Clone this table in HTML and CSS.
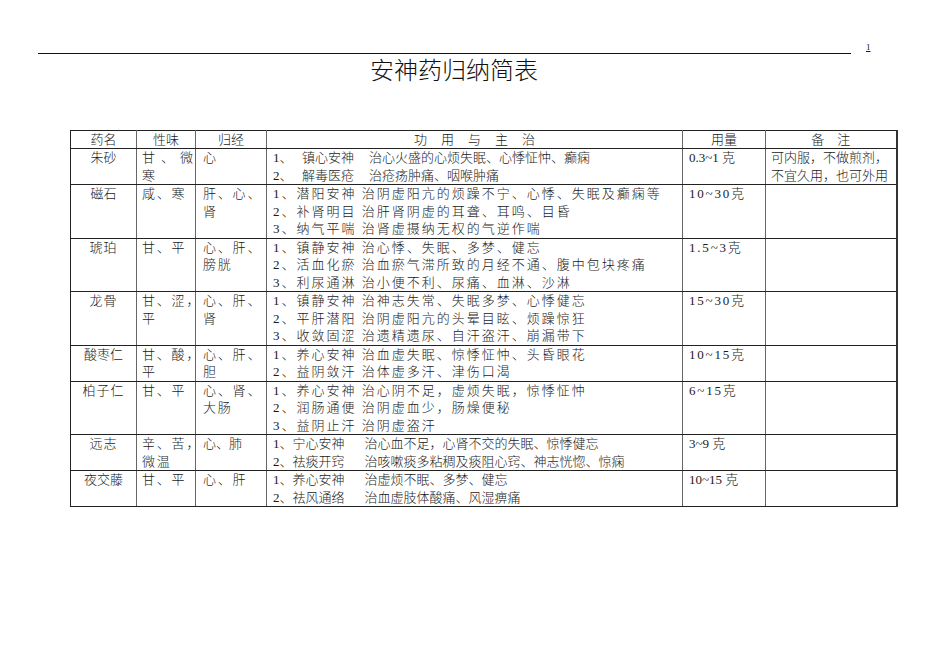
FILE: index.html
```html
<!DOCTYPE html>
<html lang="zh-CN">
<head>
<meta charset="utf-8">
<title>安神药归纳简表</title>
<link rel="stylesheet" href="styles.css">
</head>
<body>
<div class="head">
  <div class="rule"></div>
  <div class="pno">1</div>
</div>
<h1 class="title">安神药归纳简表</h1>
<table class="tbl">
  <colgroup>
    <col class="c-name"><col class="c-taste"><col class="c-mer"><col class="c-eff"><col class="c-dose"><col class="c-note">
  </colgroup>
  <thead>
    <tr>
      <th>药名</th><th>性味</th><th>归经</th><th class="wide">功用与主治</th><th>用量</th><th class="wide2">备注</th>
    </tr>
  </thead>
  <tbody>
    <tr>
      <td class="name">朱砂</td>
      <td class="taste"><div class="just">甘<span>、</span>微</div><div>寒</div></td>
      <td class="mer"><div>心</div></td>
      <td class="eff">
        <div class="ln"><span class="no">1、</span><span class="term">镇心安神</span><span class="gap1"></span>治心火盛的心烦失眠、心悸怔忡、癫痫</div>
        <div class="ln"><span class="no">2、</span><span class="term">解毒医疮</span><span class="gap1"></span>治疮疡肿痛、咽喉肿痛</div>
      </td>
      <td class="dose">0.3~1 克</td>
      <td class="note"><div>可内服，不做煎剂，</div><div>不宜久用，也可外用</div></td>
    </tr>
    <tr>
      <td class="name">磁石</td>
      <td class="taste sp"><div>咸、寒</div></td>
      <td class="mer sp"><div>肝、心、</div><div>肾</div></td>
      <td class="eff sp">
        <div class="ln">1、潜阳安神 治阴虚阳亢的烦躁不宁、心悸、失眠及癫痫等</div>
        <div class="ln">2、补肾明目 治肝肾阴虚的耳聋、耳鸣、目昏</div>
        <div class="ln">3、纳气平喘 治肾虚摄纳无权的气逆作喘</div>
      </td>
      <td class="dose sp">10~30克</td>
      <td class="note"></td>
    </tr>
    <tr>
      <td class="name sp">琥珀</td>
      <td class="taste sp"><div>甘、平</div></td>
      <td class="mer sp"><div>心、肝、</div><div>膀胱</div></td>
      <td class="eff sp">
        <div class="ln">1、镇静安神 治心悸、失眠、多梦、健忘</div>
        <div class="ln">2、活血化瘀 治血瘀气滞所致的月经不通、腹中包块疼痛</div>
        <div class="ln">3、利尿通淋 治小便不利、尿痛、血淋、沙淋</div>
      </td>
      <td class="dose sp">1.5~3克</td>
      <td class="note"></td>
    </tr>
    <tr>
      <td class="name sp">龙骨</td>
      <td class="taste sp"><div>甘、涩，</div><div>平</div></td>
      <td class="mer sp"><div>心、肝、</div><div>肾</div></td>
      <td class="eff sp">
        <div class="ln">1、镇静安神 治神志失常、失眠多梦、心悸健忘</div>
        <div class="ln">2、平肝潜阳 治阴虚阳亢的头晕目眩、烦躁惊狂</div>
        <div class="ln">3、收敛固涩 治遗精遗尿、自汗盗汗、崩漏带下</div>
      </td>
      <td class="dose sp">15~30克</td>
      <td class="note"></td>
    </tr>
    <tr>
      <td class="name">酸枣仁</td>
      <td class="taste sp"><div>甘、酸，</div><div>平</div></td>
      <td class="mer sp"><div>心、肝、</div><div>胆</div></td>
      <td class="eff sp">
        <div class="ln">1、养心安神 治血虚失眠、惊悸怔忡、头昏眼花</div>
        <div class="ln">2、益阴敛汗 治体虚多汗、津伤口渴</div>
      </td>
      <td class="dose sp">10~15克</td>
      <td class="note"></td>
    </tr>
    <tr>
      <td class="name sp">柏子仁</td>
      <td class="taste sp"><div>甘、平</div></td>
      <td class="mer sp"><div>心、肾、</div><div>大肠</div></td>
      <td class="eff sp">
        <div class="ln">1、养心安神 治心阴不足，虚烦失眠，惊悸怔忡</div>
        <div class="ln">2、润肠通便 治阴虚血少，肠燥便秘</div>
        <div class="ln">3、益阴止汗 治阴虚盗汗</div>
      </td>
      <td class="dose sp">6~15克</td>
      <td class="note"></td>
    </tr>
    <tr>
      <td class="name sp">远志</td>
      <td class="taste sp"><div>辛、苦，</div><div>微温</div></td>
      <td class="mer"><div>心、肺</div></td>
      <td class="eff">
        <div class="ln">1、宁心安神<span class="gap2"></span>治心血不足，心肾不交的失眠、惊悸健忘</div>
        <div class="ln">2、祛痰开窍<span class="gap2"></span>治咳嗽痰多粘稠及痰阻心窍、神志恍惚、惊痫</div>
      </td>
      <td class="dose">3~9 克</td>
      <td class="note"></td>
    </tr>
    <tr>
      <td class="name">夜交藤</td>
      <td class="taste sp"><div>甘、平</div></td>
      <td class="mer sp"><div>心、肝</div></td>
      <td class="eff">
        <div class="ln">1、养心安神<span class="gap2"></span>治虚烦不眠、多梦、健忘</div>
        <div class="ln">2、祛风通络<span class="gap2"></span>治血虚肢体酸痛、风湿痹痛</div>
      </td>
      <td class="dose">10~15 克</td>
      <td class="note"></td>
    </tr>
  </tbody>
</table>
</body>
</html>
```

FILE: styles.css
```css
html, body {
  margin: 0;
  padding: 0;
  background: #ffffff;
}
body {
  font-family: "Liberation Serif", "Noto Sans CJK SC", serif;
  color: #1a1a1a;
  width: 950px;
}
.head {
  display: flex;
  align-items: flex-end;
  margin-left: 38px;
  height: 54px;
}
.rule {
  width: 813px;
  height: 53px;
  border-bottom: 1px solid #111;
}
.pno {
  margin-left: 15px;
  margin-bottom: 2px;
  font-size: 9px;
  line-height: 9px;
  text-decoration: underline;
}
.title {
  margin: 3px 0 0 370px;
  font-size: 24px;
  line-height: 28px;
  font-weight: 300;
  letter-spacing: 0;
  color: #111;
}
.tbl {
  margin: 45px 0 0 70px;
  border-collapse: collapse;
  table-layout: fixed;
  width: 826px;
  font-size: 13px;
  font-weight: 300;
}
.c-name { width: 66px; }
.c-taste { width: 59px; }
.c-mer { width: 71px; }
.c-eff { width: 416px; }
.c-dose { width: 83px; }
.c-note { width: 131px; }
.tbl th, .tbl td {
  border-top: 1px solid #222;
  border-bottom: 1px solid #222;
  border-left: 1px solid #666;
  border-right: 1px solid #666;
  padding: 0;
  vertical-align: top;
  line-height: 17.5px;
  white-space: nowrap;
}
.tbl th:first-child, .tbl td:first-child {
  border-left: 1px solid #222;
}
.tbl th:last-child, .tbl td:last-child {
  border-right: 2px solid #333;
}
.tbl th {
  font-weight: 300;
  text-align: center;
  line-height: 17px;
}
.tbl th.wide { letter-spacing: 14px; text-indent: 14px; }
.tbl th.wide2 { letter-spacing: 13px; text-indent: 13px; }
.name {
  text-align: center;
}
.name.sp { letter-spacing: 1px; }
.taste {
  padding: 0 2px 0 5px !important;
}
.mer {
  padding: 0 2px 0 7px !important;
}
.eff {
  padding: 0 0 0 6px !important;
}
.dose {
  padding: 0 0 0 6px !important;
}
.note {
  padding: 0 0 0 5px !important;
}
.sp { letter-spacing: 1.8px; }
.eff.sp { letter-spacing: 2px; }
.just {
  display: flex;
  justify-content: space-between;
}
.no {
  display: inline-block;
  width: 29px;
}
.gap1 {
  display: inline-block;
  width: 15px;
}
.gap2 {
  display: inline-block;
  width: 20px;
}
```
